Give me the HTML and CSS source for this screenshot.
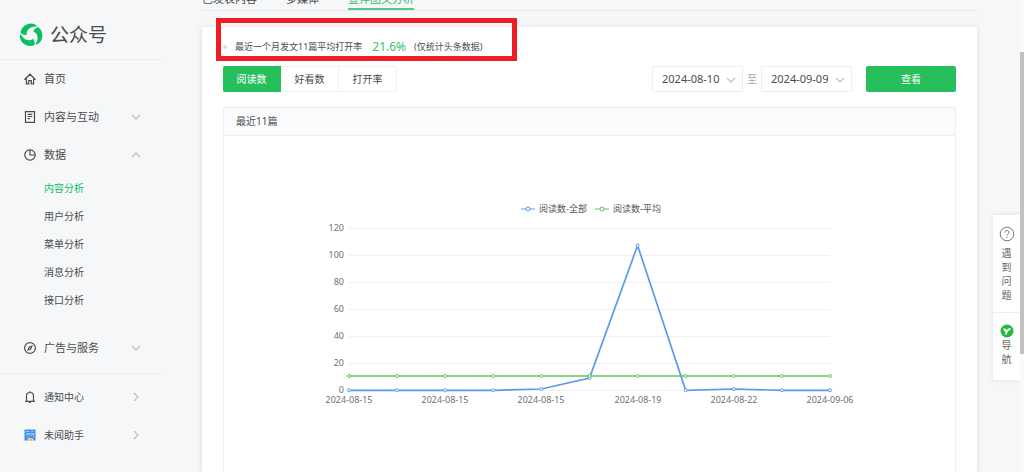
FILE: index.html
```html
<!DOCTYPE html>
<html lang="zh-CN">
<head>
<meta charset="utf-8">
<title>公众号</title>
<meta name="viewport" content="width=device-width, initial-scale=1">
<link rel="stylesheet" href="styles.css">
</head>
<body>
<div class="page">
  <aside class="sidebar">
    <div class="brand">
      <svg class="brand-logo" viewBox="0 0 24 24" aria-hidden="true">
        <defs><path id="blade" d="M1.500 9.500C2.500 4 7 .5 12 .5c2.600 0 4.800 1 6.300 3C14.500 3.200 11 4.200 9.200 6.600 7.900 8.400 7.500 10 7.800 12 5 12.200 2.500 11.300 1.500 9.500z"/></defs>
        <g fill="#07c160">
          <use href="#blade"/>
          <use href="#blade" transform="rotate(120 12 12)"/>
          <use href="#blade" transform="rotate(240 12 12)"/>
        </g>
      </svg>
      <span class="brand-name">公众号</span>
    </div>
    <nav class="nav">
      <a class="item" href="#">
        <svg class="icon" viewBox="0 0 12 12"><path d="M.8 6.200 6 1.200l5.200 5H9.600v4.600H7.300V7.600H4.700v3.200H2.400V6.200z"/></svg>
        <span class="label">首页</span>
      </a>
      <a class="item" href="#">
        <svg class="icon" viewBox="0 0 12 12"><path d="M1.500.7h9v10.600h-9zM3.700 3.400h4.600M3.700 5.500h4.600M3.700 7.600h2.200"/></svg>
        <span class="label">内容与互动</span>
        <svg class="chevron" viewBox="0 0 10 10"><path d="M1 3l4 4 4-4"/></svg>
      </a>
      <a class="item" href="#">
        <svg class="icon" viewBox="0 0 12 12"><circle cx="6" cy="6" r="5.200"/><path d="M6 .8V6h5.200"/></svg>
        <span class="label">数据</span>
        <svg class="chevron" viewBox="0 0 10 10"><path d="M1 7l4-4 4 4"/></svg>
      </a>
      <a class="sub active" href="#">内容分析</a>
      <a class="sub" href="#">用户分析</a>
      <a class="sub" href="#">菜单分析</a>
      <a class="sub" href="#">消息分析</a>
      <a class="sub" href="#">接口分析</a>
      <a class="item spaced" href="#">
        <svg class="icon" viewBox="0 0 12 12"><circle cx="6" cy="6" r="5.400"/><path class="solid" d="M9 3 7.200 7.200 3 9l1.800-4.200z"/><path class="needle" d="M5.400 6.600l1.200-1.200"/></svg>
        <span class="label">广告与服务</span>
        <svg class="chevron" viewBox="0 0 10 10"><path d="M1 3l4 4 4-4"/></svg>
      </a>
    </nav>
    <nav class="nav-foot">
      <a class="item small" href="#">
        <svg class="icon" viewBox="0 0 12 12"><path d="M1.200 10.300h9.600M2.500 10.300V5a3.500 3.500 0 0 1 7 0v5.300M6 .2v1.300M5 11.600h2"/></svg>
        <span class="label">通知中心</span>
        <svg class="chevron" viewBox="0 0 10 10"><path d="M3 1l4 4-4 4"/></svg>
      </a>
      <a class="item small" href="#">
        <svg class="icon avatar" viewBox="0 0 12 12"><path fill="#3f8ff0" d="M.5.500h11v11H.5z"/><path stroke="#b8d8ff" stroke-width=".8" fill="none" d="M2 2.500h3.500M7 2.200h3M2.500 4.500h6.500M2 6.500l2-1.500 2 2 3-2M3 9l1.500-1.500M9.500 4v4"/><path fill="#e9f3ff" d="M4.500 9h4l1.500 2.500H3.500z"/><path fill="#f5b452" d="M4 9.200 6 9.800l2.500-1.300.8 1L7.500 12h-1.500z"/></svg>
        <span class="label">未闻助手</span>
        <svg class="chevron" viewBox="0 0 10 10"><path d="M3 1l4 4-4 4"/></svg>
      </a>
    </nav>
  </aside>

  <main class="main">
    <div class="tabs">
      <a class="tab" href="#">已发表内容</a>
      <a class="tab" href="#">多媒体</a>
      <a class="tab current" href="#">壹伴图文分析</a>
    </div>
    <section class="card">
      <p class="summary"><span class="dot"></span><span>最近一个月发文11篇平均打开率</span><strong class="rate">21.6%</strong><span>(仅统计头条数据)</span></p>
      <div class="controls">
        <div class="segments">
          <button class="segment on" type="button">阅读数</button>
          <button class="segment" type="button">好看数</button>
          <button class="segment" type="button">打开率</button>
        </div>
        <div class="range">
          <span class="picker">
            <select class="date" aria-label="开始日期"><option>2024-08-10</option></select>
            <svg class="caret" viewBox="0 0 10 10"><path d="M1 3l4 4 4-4"/></svg>
          </span>
          <span class="to">至</span>
          <span class="picker">
            <select class="date" aria-label="结束日期"><option>2024-09-09</option></select>
            <svg class="caret" viewBox="0 0 10 10"><path d="M1 3l4 4 4-4"/></svg>
          </span>
        </div>
        <button class="submit" type="button">查看</button>
      </div>
      <section class="panel">
        <h2 class="panel-title">最近11篇</h2>
        <svg class="chart" viewBox="0 0 731 336" role="img" aria-label="阅读数">
          <g class="legend">
            <path class="all" d="M297 73h14"/><circle class="all" cx="304" cy="73" r="2"/>
            <text x="315" y="76">阅读数-全部</text>
            <path class="avg" d="M371 73h14"/><circle class="avg" cx="378" cy="73" r="2"/>
            <text x="389" y="76">阅读数-平均</text>
          </g>
          <path class="grid" d="M125 92.500h481M125 119.500h481M125 146.500h481M125 173.500h481M125 200.500h481M125 227.500h481M125 254.500h481"/>
          <g class="y-axis">
            <text x="120" y="95">120</text><text x="120" y="122">100</text><text x="120" y="149">80</text><text x="120" y="176">60</text><text x="120" y="203">40</text><text x="120" y="230">20</text><text x="120" y="257">0</text>
          </g>
          <g class="x-axis">
            <text x="125" y="267">2024-08-15</text><text x="221" y="267">2024-08-15</text><text x="317" y="267">2024-08-15</text><text x="414" y="267">2024-08-19</text><text x="510" y="267">2024-08-22</text><text x="606" y="267">2024-09-06</text>
          </g>
          <g class="all">
            <path class="series" d="M125 254.300 173.100 254.300 221.200 254.300 269.300 254.300 317.400 253 365.500 242 413.600 109.500 461.700 254.300 509.800 253 557.900 254.300 606 254.300"/>
            <circle cx="125" cy="254.300" r="1.500"/><circle cx="173.100" cy="254.300" r="1.500"/><circle cx="221.200" cy="254.300" r="1.500"/><circle cx="269.300" cy="254.300" r="1.500"/><circle cx="317.400" cy="253" r="1.500"/><circle cx="365.500" cy="242" r="1.500"/><circle cx="413.600" cy="109.500" r="1.500"/><circle cx="461.700" cy="254.300" r="1.500"/><circle cx="509.800" cy="253" r="1.500"/><circle cx="557.900" cy="254.300" r="1.500"/><circle cx="606" cy="254.300" r="1.500"/>
          </g>
          <g class="avg">
            <path class="series" d="M125 240h481"/>
            <circle cx="125" cy="240" r="1.500"/><circle cx="173.100" cy="240" r="1.500"/><circle cx="221.200" cy="240" r="1.500"/><circle cx="269.300" cy="240" r="1.500"/><circle cx="317.400" cy="240" r="1.500"/><circle cx="365.500" cy="240" r="1.500"/><circle cx="413.600" cy="240" r="1.500"/><circle cx="461.700" cy="240" r="1.500"/><circle cx="509.800" cy="240" r="1.500"/><circle cx="557.900" cy="240" r="1.500"/><circle cx="606" cy="240" r="1.500"/>
          </g>
        </svg>
      </section>
    </section>
  </main>

  <div class="tools">
    <button class="tool" type="button">
      <svg class="tool-help" viewBox="0 0 16 16"><circle cx="8" cy="8" r="6.800"/><path d="M6 6.500a2 2 0 1 1 3 1.700c-.7.400-1 .7-1 1.500M8 10.900v1.100"/></svg>
      <span class="tool-text">遇到问题</span>
    </button>
    <button class="tool" type="button">
      <svg class="tool-guide" viewBox="0 0 14 14"><circle cx="7" cy="7" r="6.500" fill="#22b93c"/><path fill="#fff" d="M3.500 4.200c1.700 0 2.700.8 3.200 2.200.8-1.600 2-2.400 4.200-2.400-.3 1.700-1.400 2.700-2.900 3.300L6.500 10.500H4.800l1.100-2.400C4.300 7.500 3.500 6.200 3.500 4.200z"/></svg>
      <span class="tool-text">导航</span>
    </button>
  </div>
  <div class="scrollbar"><div class="thumb"></div></div>
</div>
</body>
</html>
```

FILE: styles.css
```css
*,
*::after {
  box-sizing: border-box;
}

body {
  margin: 0;
  background: #f5f7f9;
  color: #4c4c4c;
  font: 10px/16px "Noto Sans", "Noto Sans CJK SC", sans-serif;
}

a {
  color: inherit;
  text-decoration: none;
}

button,
select {
  font: inherit;
  color: inherit;
  margin: 0;
  cursor: pointer;
}

.page {
  position: relative;
  display: grid;
  grid-template-columns: 202px 1fr;
  min-height: 100vh;
  overflow: hidden;
}

/* Sidebar */
.sidebar {
  padding-right: 38px;
}

.brand {
  display: flex;
  align-items: center;
  gap: 7px;
  height: 60px;
  padding: 10px 0 0 19px;
  border-bottom: 1px solid #eceef0;
}

.brand-logo {
  width: 24px;
  height: 24px;
}

.brand-name {
  font-size: 19px;
  line-height: 24px;
}

.item {
  display: flex;
  align-items: center;
  gap: 8px;
  height: 38px;
  padding: 0 23px 0 24px;
  font-size: 11px;
}

.item.small {
  font-size: 10px;
}

.item.spaced {
  margin-top: 15px;
}

.label {
  flex: 1;
}

.icon {
  width: 12px;
  height: 12px;
  fill: none;
  stroke: #4c4c4c;
  stroke-width: 1.2;
}

.icon .solid {
  fill: #4c4c4c;
  stroke: none;
}

.icon .needle {
  stroke: #f5f7f9;
  stroke-width: 1;
}

.icon.avatar {
  stroke: none;
}

.chevron,
.caret {
  width: 10px;
  height: 10px;
  fill: none;
  stroke: #bbbdbf;
  stroke-width: 1.1;
}

.sub {
  display: block;
  height: 28px;
  padding-left: 44px;
  line-height: 28px;
}

.sub.active {
  color: #07c160;
}

.nav-foot {
  margin-top: 6px;
  padding-top: 4px;
  border-top: 1px solid #eceef0;
}

/* Main column */
.main {
  display: flex;
  flex-direction: column;
  gap: 16px;
  padding-right: 47px;
}

.tabs {
  display: flex;
  align-items: flex-end;
  gap: 29px;
  height: 11px;
  font-size: 11px;
  border-bottom: 1px solid #e7e9eb;
}

.tab {
  height: 19px;
  line-height: 16px;
}

.tab.current {
  color: #2fbf66;
  border-bottom: 2px solid #4fca80;
}

.card {
  flex: 1;
  display: flex;
  flex-direction: column;
  padding: 0 21px;
  background: #fff;
  box-shadow: 0 1px 6px rgba(0, 0, 0, 0.12);
}

.summary {
  position: relative;
  display: flex;
  align-items: center;
  gap: 8px;
  height: 39px;
  margin: 0;
  font-size: 9px;
}

.summary::after {
  content: "";
  position: absolute;
  top: -9px;
  left: -7px;
  width: 301px;
  height: 43px;
  border: 5px solid #ee1c25;
}

.dot {
  width: 4px;
  height: 4px;
  border-radius: 50%;
  background: #ddd;
}

.rate {
  margin-left: 2px;
  color: #3fbf6a;
  font-size: 12px;
  font-weight: 400;
}

.controls {
  display: flex;
  align-items: center;
  height: 26px;
}

.segments {
  display: flex;
}

.segment {
  width: 58px;
  height: 26px;
  padding: 0;
  border: 1px solid #f0f0f0;
  border-left-width: 0;
  background: #fff;
}

.segment:last-child {
  border-radius: 0 2px 2px 0;
}

.segment.on {
  border-color: #26bf5c;
  border-radius: 2px 0 0 2px;
  background: #26bf5c;
  color: #fff;
}

.range {
  display: flex;
  align-items: center;
  gap: 4px;
  margin-left: auto;
}

.picker {
  position: relative;
}

.date {
  display: block;
  width: 91px;
  height: 26px;
  padding: 0 9px;
  border: 1px solid #eee;
  border-radius: 2px;
  background: #fff;
  font-size: 11px;
  appearance: none;
}

.caret {
  position: absolute;
  top: 9px;
  right: 7px;
  pointer-events: none;
}

.to {
  color: #aaa;
}

.submit {
  width: 90px;
  height: 26px;
  margin-left: 14px;
  border: 0;
  border-radius: 2px;
  background: #26bf5c;
  color: #fff;
}

.panel {
  flex: 1;
  margin-top: 15px;
  border: 1px solid #eceef2;
  border-bottom: 0;
}

.panel-title {
  margin: 0;
  padding: 0 12px;
  border-bottom: 1px solid #eceef2;
  background: #fafbfd;
  font-size: 10px;
  font-weight: 400;
  line-height: 27px;
}

/* Chart */
.chart {
  display: block;
  width: 100%;
}

.chart text {
  fill: #6e7079;
  font-size: 9px;
}

.chart .legend text {
  fill: #555;
}

.chart .grid {
  stroke: #f0f0f0;
}

.chart .y-axis text {
  text-anchor: end;
}

.chart .x-axis text {
  text-anchor: middle;
}

.chart .all {
  stroke: #5b9bea;
}

.chart .avg {
  stroke: #5cc45c;
}

.chart .series {
  fill: none;
  stroke-width: 1.7;
}

.chart text {
  stroke: none;
}

.chart circle {
  fill: #fff;
}

/* Floating tools */
.tools {
  position: absolute;
  top: 215px;
  right: 4px;
  width: 27px;
  box-shadow: 0 0 5px rgba(0, 0, 0, 0.1);
}

.tool {
  display: flex;
  flex-direction: column;
  align-items: center;
  gap: 4px;
  width: 100%;
  padding: 11px 5px 10px;
  border: 0;
  background: #fff;
  color: #666;
  line-height: 14px;
}

.tool + .tool {
  padding-bottom: 14px;
  border-top: 1px solid #eee;
  gap: 0;
}

.tool-text {
  width: 11px;
}

.tool-help {
  width: 16px;
  height: 16px;
  fill: none;
  stroke: #777;
}

.tool-guide {
  width: 14px;
  height: 14px;
}

.scrollbar {
  position: absolute;
  top: 0;
  right: 0;
  bottom: 0;
  width: 4px;
  padding-top: 52px;
  background: #fafafa;
}

.thumb {
  height: 302px;
  background: #c1c1c1;
}
```
